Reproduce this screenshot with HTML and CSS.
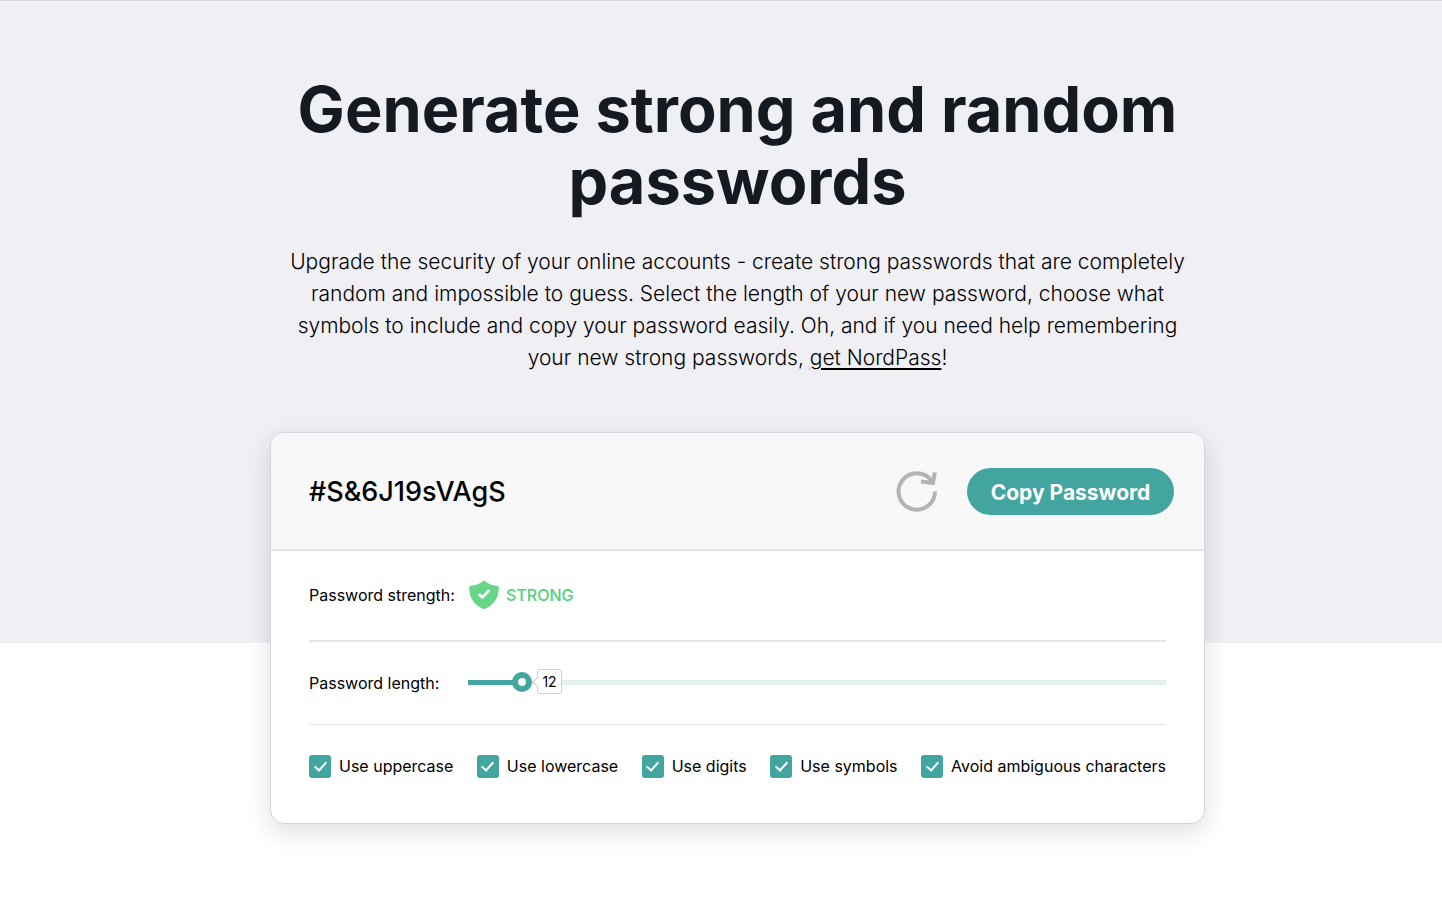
FILE: index.html
```html
<!DOCTYPE html>
<html lang="en">
<head>
<meta charset="utf-8">
<title>Password Generator</title>
<link rel="stylesheet" href="styles.css">
</head>
<body>
<main class="hero">
  <div class="container">
    <h1 class="title">Generate strong and random<br>passwords</h1>
    <p class="intro">Upgrade the security of your online accounts - create strong passwords that are completely<br>
      random and impossible to guess. Select the length of your new password, choose what<br>
      symbols to include and copy your password easily. Oh, and if you need help remembering<br>
      your new strong passwords, <a class="intro-link" href="#">get NordPass</a>!</p>
    <section class="card">
      <div class="card-head">
        <output class="password">#S&amp;6J19sVAgS</output>
        <button class="refresh" type="button" aria-label="Generate new password">
          <svg width="42" height="42" viewBox="0 0 42 42" fill="none" stroke="#b4b4b8" stroke-width="4">
            <path d="M39 21.5A18.2 18.2 0 1 1 35.5 10.7"/>
            <path d="M38.8 2.4L37 13L25 11.6"/>
          </svg>
        </button>
        <button class="copy" type="button">Copy Password</button>
      </div>
      <div class="card-body">
        <div class="row row-strength">
          <span class="row-label">Password strength:</span>
          <svg class="shield" width="30" height="30" viewBox="0 0 30 30">
            <path d="M15 .5C19 3.8 24 5.7 29.7 6.3C30.5 17 25 25.5 15 29.3C5 25.5-.5 17 .3 6.3C6 5.7 11 3.8 15 .5Z" fill="#66d587"/>
            <path d="M9.7 14L13.3 17.5L20.3 10" fill="none" stroke="#fff" stroke-width="2.6"/>
          </svg>
          <span class="strength">STRONG</span>
        </div>
        <div class="row row-length">
          <label class="row-label" for="length">Password length:</label>
          <div class="slider">
            <input class="range" id="length" type="range" min="8" max="70" value="12">
            <output class="bubble" for="length">12</output>
          </div>
        </div>
        <div class="options">
          <label class="option"><input class="check" type="checkbox" checked>Use uppercase</label>
          <label class="option"><input class="check" type="checkbox" checked>Use lowercase</label>
          <label class="option"><input class="check" type="checkbox" checked>Use digits</label>
          <label class="option"><input class="check" type="checkbox" checked>Use symbols</label>
          <label class="option"><input class="check" type="checkbox" checked>Avoid ambiguous characters</label>
        </div>
      </div>
    </section>
  </div>
</main>
</body>
</html>
```
FILE: styles.css
```css
* { box-sizing: border-box; }
body {
  min-height: 100vh;
  margin: 0;
  background: #fff;
  color: #000;
  font-family: Inter, "Liberation Sans", sans-serif;
  font-size: 16px;
}
button, input { font: inherit; }
.hero {
  display: flow-root;
  background: #efeff4;
  border-top: 1px solid #d6d6dc;
  padding: 72px 0 0 33px;
}
.container {
  max-width: 935px;
  margin: 0 auto -181px;
}
.title {
  margin: 0 0 29px;
  color: #141922;
  font-size: 63px;
  font-weight: 700;
  line-height: 72px;
  text-align: center;
}
.intro {
  margin: 0 0 58px;
  font-size: 21px;
  font-weight: 300;
  line-height: 32px;
  text-align: center;
  white-space: nowrap;
}
.intro-link {
  color: inherit;
  text-underline-offset: 3px;
  text-decoration-thickness: 2px;
}
.card {
  background: #fff;
  border: 1px solid #d4d5da;
  border-radius: 14px;
  box-shadow: 0 8px 24px rgba(30, 35, 50, .14);
}
.card-head {
  display: flex;
  align-items: center;
  height: 118px;
  padding: 0 30px 0 38px;
  background: #f8f8f8;
  border-bottom: 2px solid #e3e3e5;
  border-radius: 13px 13px 0 0;
}
.password {
  flex: 1;
  font-size: 27px;
  font-weight: 500;
}
.refresh {
  display: flex;
  margin-right: 29px;
  padding: 0;
  border: 0;
  background: none;
}
.copy {
  width: 207px;
  height: 47px;
  padding: 2px 0 0;
  border: 0;
  border-radius: 24px;
  background: #43a5a0;
  color: #fff;
  font-size: 21px;
  font-weight: 700;
}
.card-body { padding: 0 38px 16px; }
.row {
  display: flex;
  align-items: center;
  border-bottom: 1px solid #e4e4e6;
}
.row-label { width: 159px; }
.row-strength {
  height: 91px;
  padding-bottom: 2px;
  border-bottom-width: 2px;
}
.row-length { height: 83px; }
.shield {
  flex: none;
  margin: 0 7px 0 1px;
}
.strength {
  color: #4cd279;
  font-weight: 500;
}
.slider {
  position: relative;
  flex: 1;
  display: flex;
  padding-bottom: 2px;
}
.range {
  appearance: none;
  width: 100%;
  height: 20px;
  margin: 0;
  background: linear-gradient(90deg, #43a5a0 54px, #e2f2f1 54px) center / 100% 5px no-repeat;
}
.range::-webkit-slider-thumb {
  appearance: none;
  width: 20px;
  height: 20px;
  border: 6px solid #43a5a0;
  border-radius: 50%;
  background: #fff;
}
.bubble {
  position: absolute;
  left: 69px;
  top: -3px;
  width: 25px;
  height: 25px;
  border: 1px solid #d0d0d4;
  border-radius: 3px;
  background: #fff;
  font-size: 14px;
  line-height: 24px;
  text-align: center;
}
.bubble::before {
  content: "";
  position: absolute;
  left: -4px;
  top: 8px;
  width: 7px;
  height: 7px;
  border: solid #d0d0d4;
  border-width: 0 0 1px 1px;
  background: #fff;
  transform: rotate(45deg);
}
.options {
  display: flex;
  align-items: center;
  justify-content: space-between;
  height: 82px;
}
.option {
  display: flex;
  align-items: center;
  gap: 8px;
  white-space: nowrap;
}
.check {
  appearance: none;
  display: grid;
  place-items: center;
  width: 22px;
  height: 23px;
  margin: 0;
  border-radius: 3px;
  background: #43a5a0;
}
.check:checked::before {
  content: "";
  box-sizing: border-box;
  width: 7px;
  height: 12px;
  margin-bottom: 3px;
  border: solid #fff;
  border-width: 0 2px 2px 0;
  transform: rotate(42deg);
}
```
